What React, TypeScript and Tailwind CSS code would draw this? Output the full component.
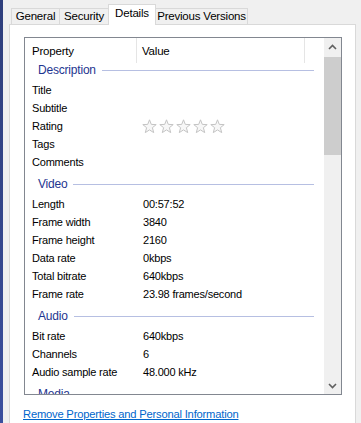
import React from "react";

const font = {
  fontFamily: '"Liberation Sans", Arial, sans-serif',
  letterSpacing: "-0.2px",
};

function Star() {
  return (
    <svg width="15" height="15" viewBox="0 0 15 15" className="block">
      <polygon
        points="7.5,0.8 9.3,5.4 14.2,5.6 10.4,8.7 11.7,13.6 7.5,10.9 3.3,13.6 4.6,8.7 0.8,5.6 5.7,5.4"
        fill="#f7f7f7"
        stroke="#c4c4c4"
        strokeWidth="1"
        strokeLinejoin="round"
      />
    </svg>
  );
}

function Group({ title }: { title: string }) {
  return (
    <div className="h-[24px] flex items-center pt-[2px] pl-[13px] pr-[10px]">
      <span className="text-[#1e3590] leading-none text-[12px]">{title}</span>
      <div className="flex-1 h-px bg-[#b6bfe2] ml-[6px]" />
    </div>
  );
}

function Row({ label, value }: { label: string; value?: React.ReactNode }) {
  return (
    <div className="h-[18px] flex items-center pt-[1px] text-black">
      <div className="w-[118px] pl-[7px] shrink-0 leading-none">{label}</div>
      <div className="leading-none">{value}</div>
    </div>
  );
}

function Chevron({ up }: { up: boolean }) {
  return (
    <svg width="9" height="6" viewBox="0 0 9 6" className="block">
      <polyline
        points={up ? "1,5 4.5,1.5 8,5" : "1,1 4.5,4.5 8,1"}
        fill="none"
        stroke="#606060"
        strokeWidth="1.6"
      />
    </svg>
  );
}

export default function App() {
  return (
    <div
      className="w-[361px] h-[423px] flex bg-[#f0f0f0] overflow-hidden text-[11px]"
      style={font}
    >
      <div className="w-[3px] bg-gradient-to-b from-[#2f3f7c] via-[#34468a] to-[#3b4f9e]" />
      <div className="flex-1 pl-[6px] pr-[5px] pt-[4px] flex flex-col">
        {/* Tabs */}
        <div className="h-[20px] flex items-end pl-[2px] relative z-10 text-[11.5px]">
          <div className="w-[49px] h-[16px] border border-b-0 border-[#d9d9d9] bg-[#f0f0f0] flex items-center justify-center text-black leading-none">
            General
          </div>
          <div className="w-[50px] h-[16px] -ml-px border border-b-0 border-[#d9d9d9] bg-[#f0f0f0] flex items-center justify-center text-black leading-none">
            Security
          </div>
          <div className="w-[48px] h-[21px] -ml-px -mb-px border border-b-0 border-[#d9d9d9] bg-white flex items-center justify-center pb-[2px] text-black leading-none">
            Details
          </div>
          <div className="w-[93px] h-[16px] -ml-px border border-b-0 border-[#d9d9d9] bg-[#f0f0f0] flex items-center justify-center text-black leading-none">
            Previous Versions
          </div>
        </div>
        {/* Panel */}
        <div className="flex-1 bg-white border border-b-0 border-[#d9d9d9] pt-[12px] pl-[14px] flex flex-col">
          <div className="w-[318px] h-[358px] border border-[#828790] flex overflow-hidden">
            <div className="flex-1 flex flex-col overflow-hidden">
              <div className="h-[25px] shrink-0 flex text-black text-[11.5px]">
                <div className="w-[112px] pl-[7px] border-r border-[#e5e5e5] flex items-center pt-[3px] leading-none">
                  Property
                </div>
                <div className="w-[168px] pl-[5px] border-r border-[#e5e5e5] flex items-center pt-[3px] leading-none">
                  Value
                </div>
              </div>
              <div className="-mt-[6px] flex flex-col">
                <Group title="Description" />
                <Row label="Title" />
                <Row label="Subtitle" />
                <Row
                  label="Rating"
                  value={
                    <div className="flex gap-[2px] -ml-[1px] -mt-[1px]">
                      <Star />
                      <Star />
                      <Star />
                      <Star />
                      <Star />
                    </div>
                  }
                />
                <Row label="Tags" />
                <Row label="Comments" />
                <Group title="Video" />
                <Row label="Length" value="00:57:52" />
                <Row label="Frame width" value="3840" />
                <Row label="Frame height" value="2160" />
                <Row label="Data rate" value="0kbps" />
                <Row label="Total bitrate" value="640kbps" />
                <Row label="Frame rate" value="23.98 frames/second" />
                <Group title="Audio" />
                <Row label="Bit rate" value="640kbps" />
                <Row label="Channels" value="6" />
                <Row label="Audio sample rate" value="48.000 kHz" />
                <Group title="Media" />
              </div>
            </div>
            {/* Scrollbar */}
            <div className="w-[17px] bg-[#f0f0f0] flex flex-col shrink-0">
              <div className="h-[18px] flex items-center justify-center">
                <Chevron up />
              </div>
              <div className="h-[98px] bg-[#cdcdcd] mt-[1px]" />
              <div className="flex-1" />
              <div className="h-[17px] flex items-center justify-center">
                <Chevron up={false} />
              </div>
            </div>
          </div>
          <div className="mt-[11px] -ml-[1px] text-[11.2px]">
            <span className="text-[#0066cc] underline leading-none">
              Remove Properties and Personal Information
            </span>
          </div>
        </div>
      </div>
    </div>
  );
}
